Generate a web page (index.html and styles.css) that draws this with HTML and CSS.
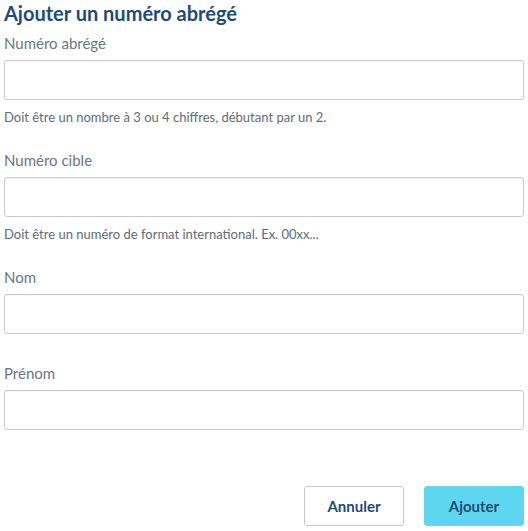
FILE: index.html
```html
<!DOCTYPE html>
<html lang="fr">
<head>
<meta charset="utf-8">
<title>Ajouter un numéro abrégé</title>
<link rel="stylesheet" href="styles.css">
</head>
<body>
<form class="dialog">
  <h1 class="title">Ajouter un numéro abrégé</h1>
  <div class="field field-help">
    <label class="label" for="abrege">Numéro abrégé</label>
    <input class="input" id="abrege" type="text">
    <p class="help">Doit être un nombre à 3 ou 4 chiffres, débutant par un 2.</p>
  </div>
  <div class="field field-help">
    <label class="label" for="cible">Numéro cible</label>
    <input class="input" id="cible" type="text">
    <p class="help">Doit être un numéro de format international. Ex. 00xx...</p>
  </div>
  <div class="field">
    <label class="label" for="nom">Nom</label>
    <input class="input" id="nom" type="text">
  </div>
  <div class="field">
    <label class="label" for="prenom">Prénom</label>
    <input class="input" id="prenom" type="text">
  </div>
  <div class="actions">
    <button type="button" class="btn btn-secondary">Annuler</button>
    <button type="button" class="btn btn-primary">Ajouter</button>
  </div>
</form>
</body>
</html>
```
FILE: styles.css
```css
* { box-sizing: border-box; }
html, body { margin: 0; padding: 0; background: #fff; }
body {
  font-family: Lato, "Open Sans", "Liberation Sans", sans-serif;
  padding: 2px 4px 0;
}
.dialog { display: flex; flex-direction: column; }
.title {
  margin: 0 0 9px;
  font-size: 20px;
  line-height: 22px;
  font-weight: 700;
  color: #1f4b78;
}
.field {
  display: flex;
  flex-direction: column;
  margin-bottom: 29px;
}
.field-help { margin-bottom: 27px; }
.label {
  font-size: 15px;
  line-height: 20px;
  color: #6b7683;
  margin-bottom: 7px;
}
.input {
  height: 40px;
  width: 100%;
  border: 1px solid #cbcbcb;
  border-radius: 3px;
  background: #fff;
  box-shadow: inset 0 1px 1px rgba(0,0,0,0.04);
  font: inherit;
  padding: 0 10px;
  outline: none;
}
.help {
  margin: 11px 0 0;
  font-size: 13px;
  line-height: 12px;
  color: #5f6b78;
}
.actions {
  display: flex;
  justify-content: flex-end;
  gap: 20px;
  margin-top: 27px;
}
.btn {
  width: 100px;
  height: 40px;
  border-radius: 3px;
  font-family: inherit;
  font-size: 15px;
  font-weight: 700;
  color: #1f4b78;
  cursor: pointer;
}
.btn-secondary {
  background: #fff;
  border: 1px solid #c8c8c8;
}
.btn-primary {
  background: #5fd6f0;
  border: 1px solid #5fd6f0;
}
```
